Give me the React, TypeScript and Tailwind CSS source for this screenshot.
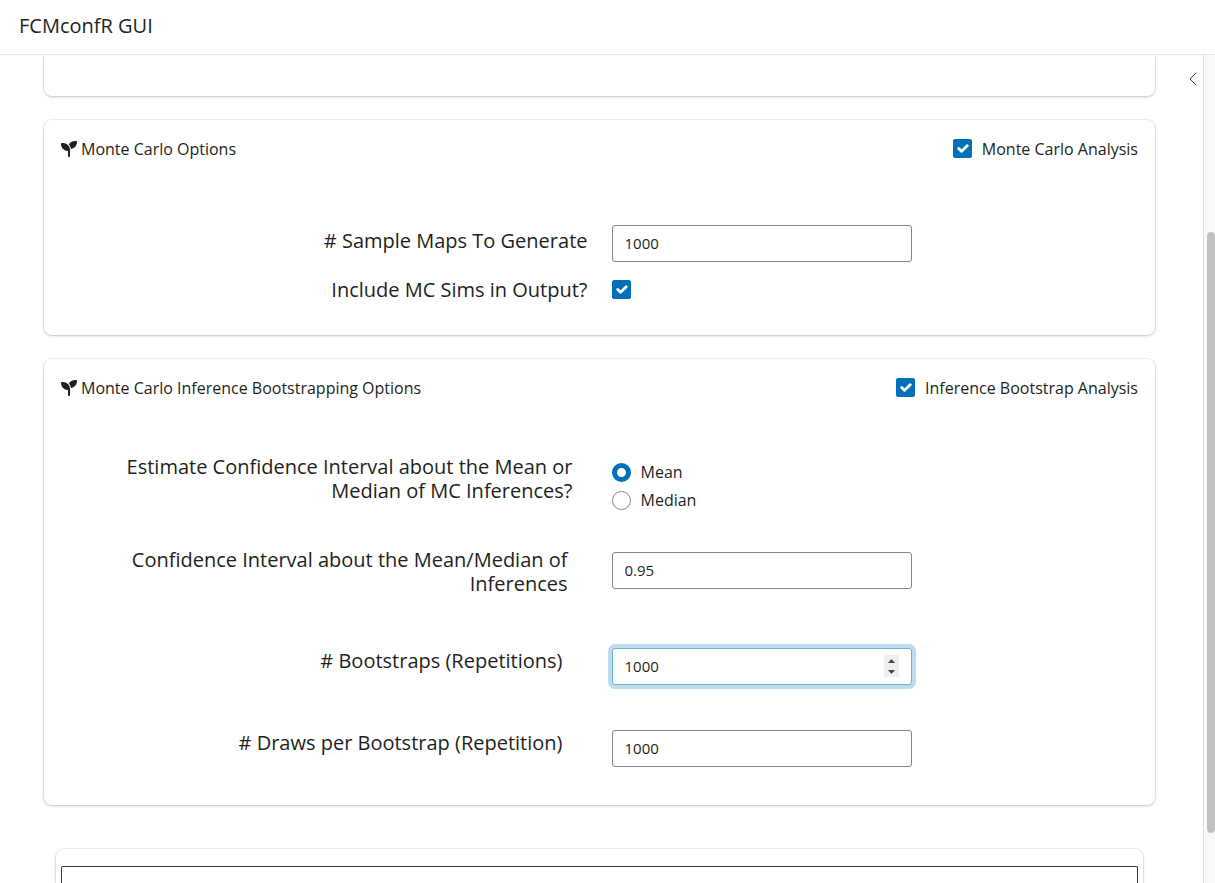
import { useRef, useState, type ReactNode } from "react";
import { FaSeedling } from "react-icons/fa6";

function Checkbox({ id }: { id: string }) {
  const [checked, setChecked] = useState(true);
  return (
    <span className="grid size-[19px] shrink-0">
      <input
        id={id}
        type="checkbox"
        checked={checked}
        onChange={(e) => setChecked(e.target.checked)}
        className="col-start-1 row-start-1 size-[19px] appearance-none rounded-[2px] border border-[#7b8794] bg-white checked:border-[#0071b9] checked:bg-[#0071b9]"
      />
      {checked && (
        <svg viewBox="0 0 20 20" aria-hidden="true" className="pointer-events-none col-start-1 row-start-1 size-[19px]">
          <path d="m6 10 3 3 6-6" fill="none" stroke="#fff" strokeWidth="3" strokeLinecap="round" strokeLinejoin="round" />
        </svg>
      )}
    </span>
  );
}

function Card({ title, toggle, id, children }: { title: string; toggle: string; id: string; children: ReactNode }) {
  return (
    <section className="shrink-0 rounded-lg bg-white shadow-[0_0_0_1px_rgba(0,0,0,0.05),0_1px_3px_rgba(0,0,0,0.2)]">
      <header className="flex items-center justify-between px-[17px] pt-[17px] text-base leading-6">
        <h2 className="flex items-center gap-1">
          <FaSeedling className="size-4" aria-hidden="true" />
          {title}
        </h2>
        <div className="flex items-start gap-[10px]">
          <div className="pt-0.5">
            <Checkbox id={id} />
          </div>
          <label htmlFor={id}>{toggle}</label>
        </div>
      </header>
      {children}
    </section>
  );
}

const row = "grid grid-cols-2 items-start gap-6";
const caption = "justify-self-end text-right text-xl leading-6";
const field =
  "h-[37px] w-[300px] rounded-[3px] border border-[#7b8794] bg-white px-3 pb-0.5 text-[15px] leading-[22px] outline-none";

export default function App() {
  const [stat, setStat] = useState("mean");
  const reps = useRef<HTMLInputElement>(null);
  return (
    <div className="flex h-screen flex-col overflow-hidden bg-white font-['Open_Sans',sans-serif] text-[#1d1f21]">
      <header className="h-[55px] shrink-0 border-b border-[#e4e7ea] px-[19px] pt-3">
        <h1 className="text-xl leading-7">FCMconfR GUI</h1>
      </header>
      <div className="flex min-h-0 flex-1">
        <main className="flex min-w-0 flex-1 flex-col gap-6 overflow-hidden pr-[27px] pl-11">
          <section className="h-[41px] shrink-0 rounded-b-lg shadow-[0_0_0_1px_rgba(0,0,0,0.05),0_1px_3px_rgba(0,0,0,0.2)]" />

          <Card id="mc" title="Monte Carlo Options" toggle="Monte Carlo Analysis">
            <div className="pt-16 pb-[33px]">
              <div className={row}>
                <label htmlFor="samples" className={`${caption} pt-1`}># Sample Maps To Generate</label>
                <input id="samples" type="number" defaultValue={1000} className={field} />
              </div>
              <div className={`${row} mt-4`}>
                <label htmlFor="sims" className={caption}>Include MC Sims in Output?</label>
                <div className="pt-0.5">
                  <Checkbox id="sims" />
                </div>
              </div>
            </div>
          </Card>

          <Card id="boot" title="Monte Carlo Inference Bootstrapping Options" toggle="Inference Bootstrap Analysis">
            <div className="pt-[55px] pb-[38px]">
              <fieldset className={row}>
                <legend className="contents">
                  <span className={`${caption} max-w-[475px] pr-[15px]`}>
                    Estimate Confidence Interval about the Mean or Median of MC Inferences?
                  </span>
                </legend>
                <div className="flex flex-col gap-1 pt-[5px]">
                  {[["mean", "Mean"], ["median", "Median"]].map(([value, text]) => (
                    <label key={value} className="flex items-center gap-[10px] text-base leading-6">
                      <input
                        type="radio"
                        name="stat"
                        value={value}
                        checked={stat === value}
                        onChange={() => setStat(value)}
                        className="size-[19px] appearance-none rounded-full border border-[#7b8794] bg-white checked:border-[5px] checked:border-[#0071b9]"
                      />
                      {text}
                    </label>
                  ))}
                </div>
              </fieldset>
              <div className={`${row} mt-9`}>
                <label htmlFor="ci" className={`${caption} max-w-[475px] pr-5`}>
                  Confidence Interval about the Mean/Median of Inferences
                </label>
                <div className="pt-1">
                  <input id="ci" type="number" step="0.01" defaultValue={0.95} className={`${field} block`} />
                </div>
              </div>
              <div className={`${row} mt-[52px]`}>
                <label htmlFor="reps" className={`${caption} pt-px pr-[25px]`}># Bootstraps (Repetitions)</label>
                <div className="flex h-[37px] w-[300px] items-start rounded-[3px] border border-[#6bb0dc] bg-white px-3 shadow-[0_0_0_4px_#bfdbed]">
                  <input
                    id="reps"
                    ref={reps}
                    type="number"
                    defaultValue={1000}
                    className="h-[35px] min-w-0 flex-1 pb-0.5 text-[15px] leading-[22px] outline-none [&::-webkit-inner-spin-button]:appearance-none"
                  />
                  <div className="mt-1.5 flex h-[22px] w-[15px] flex-col bg-[#efefef] text-[#444]">
                    <button type="button" aria-label="Increase" onClick={() => reps.current?.stepUp()} className="flex h-[11px] items-center justify-center">
                      <svg viewBox="0 0 7 4" className="h-1 w-[7px]" fill="currentColor" aria-hidden="true">
                        <path d="M0 4 3.5 0 7 4z" />
                      </svg>
                    </button>
                    <button type="button" aria-label="Decrease" onClick={() => reps.current?.stepDown()} className="flex h-[11px] items-center justify-center">
                      <svg viewBox="0 0 7 4" className="h-1 w-[7px]" fill="currentColor" aria-hidden="true">
                        <path d="M0 0h7L3.5 4z" />
                      </svg>
                    </button>
                  </div>
                </div>
              </div>
              <div className={`${row} mt-[45px]`}>
                <label htmlFor="draws" className={`${caption} pt-px pr-[25px]`}># Draws per Bootstrap (Repetition)</label>
                <input id="draws" type="number" defaultValue={1000} className={field} />
              </div>
            </div>
          </Card>

          <section className="mx-3 mt-5 flex min-h-[34px] flex-1 flex-col rounded-t-lg px-[5px] pt-[17px] shadow-[0_0_0_1px_rgba(0,0,0,0.05),0_1px_3px_rgba(0,0,0,0.2)]">
            <div className="flex-1 rounded-t-[2px] border border-b-0 border-[#333537]" />
          </section>
        </main>
        <div className="w-[21px] shrink-0 pt-[15px]">
          <button type="button" aria-label="Toggle sidebar" className="flex h-[18px] w-full items-center justify-center text-[#3a3c3e]">
            <svg viewBox="0 0 8 14" className="h-[14px] w-2" fill="none" stroke="currentColor" strokeWidth="1" strokeLinecap="round" strokeLinejoin="round" aria-hidden="true">
              <path d="M7 1 1 7l6 6" />
            </svg>
          </button>
        </div>
        <aside className="flex w-3 shrink-0 flex-col items-end border-l border-[#dfdfdf] bg-[#f9f9f9]">
          <div className="grow-[177]" />
          <div className="w-2 grow-[601] rounded-full bg-[#c1c1c1]" />
          <div className="grow-[50]" />
        </aside>
      </div>
    </div>
  );
}
